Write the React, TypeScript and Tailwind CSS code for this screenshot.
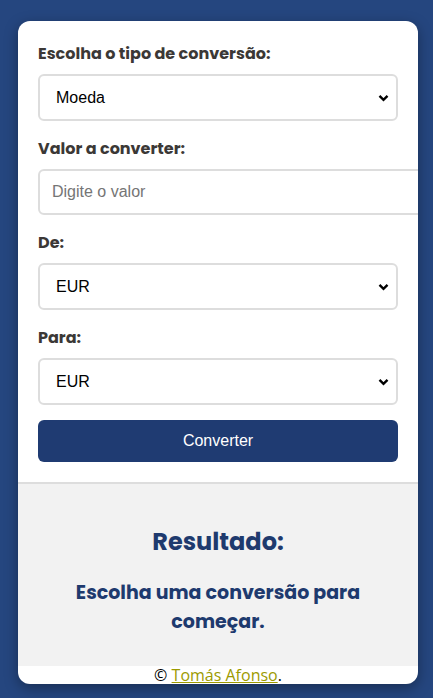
import React from "react";

const labelFont = { fontFamily: "Poppins, 'Open Sans', Lato, sans-serif" };

function Chevron() {
  return (
    <svg
      className="pointer-events-none absolute right-[9px] top-1/2 -translate-y-1/2"
      width="11"
      height="8"
      viewBox="0 0 11 8"
      fill="none"
    >
      <path d="M1.5 1.8 5.5 5.8 9.5 1.8" stroke="#000" strokeWidth="2.4" />
    </svg>
  );
}

function Field({ label, children }: { label: string; children: React.ReactNode }) {
  return (
    <div className="flex flex-col">
      <label
        className="mb-2 text-[16px] leading-[24px] font-bold text-[#3b3836]"
        style={labelFont}
      >
        {label}
      </label>
      {children}
    </div>
  );
}

function Select({ value, options }: { value: string; options: string[] }) {
  return (
    <div className="relative w-[360px]">
      <select
        defaultValue={value}
        className="h-[47px] w-full appearance-none rounded-[6px] border-2 border-[#dddddd] bg-white pl-4 text-[16px] text-black outline-none"
        style={{ fontFamily: "'Liberation Sans', Arial, sans-serif" }}
      >
        {options.map((o) => (
          <option key={o}>{o}</option>
        ))}
      </select>
      <Chevron />
    </div>
  );
}

export default function App() {
  return (
    <div className="min-h-[698px] w-full bg-[#25467f] px-[18px] pt-[21px] pb-[14px]">
      <div className="w-[400px] overflow-hidden rounded-[12px] bg-white shadow-[0_4px_14px_rgba(0,0,0,0.35)]">
        <div className="flex flex-col px-5 pt-[21px] pb-5">
          <div className="flex flex-col gap-4">
            <Field label="Escolha o tipo de conversão:">
              <Select value="Moeda" options={["Moeda", "Temperatura", "Distância"]} />
            </Field>
            <Field label="Valor a converter:">
              <input
                type="text"
                placeholder="Digite o valor"
                className="h-[46px] w-[392px] shrink-0 rounded-[6px] border-2 border-[#dddddd] bg-white px-3 text-[16px] text-black outline-none placeholder:text-[#757575]"
                style={{ fontFamily: "'Liberation Sans', Arial, sans-serif" }}
              />
            </Field>
            <Field label="De:">
              <Select value="EUR" options={["EUR", "USD", "GBP"]} />
            </Field>
            <Field label="Para:">
              <Select value="EUR" options={["EUR", "USD", "GBP"]} />
            </Field>
          </div>
          <button
            className="mt-[15px] h-[42px] w-[360px] rounded-[6px] bg-[#1f3b72] text-[16px] text-white"
            style={{ fontFamily: "'Liberation Sans', Arial, sans-serif" }}
          >
            Converter
          </button>
        </div>
        <div className="flex h-[184px] flex-col items-center border-t-2 border-[#dddddd] bg-[#f2f2f2] px-6 pt-[40px] text-center text-[#1e3a6e]">
          <h2 className="text-[24px] leading-[36px] font-bold" style={labelFont}>
            Resultado:
          </h2>
          <p className="mt-[18px] text-[19px] leading-[29px] font-bold" style={labelFont}>
            Escolha uma conversão para
            <br />
            começar.
          </p>
        </div>
        <div
          className="h-[18px] text-center text-[16px] leading-[18px] text-black"
          style={{ fontFamily: "'Open Sans', 'DejaVu Sans', sans-serif" }}
        >
          ©{" "}
          <a href="#" className="text-[#9c9a00] underline">
            Tomás Afonso
          </a>
          .
        </div>
      </div>
    </div>
  );
}
